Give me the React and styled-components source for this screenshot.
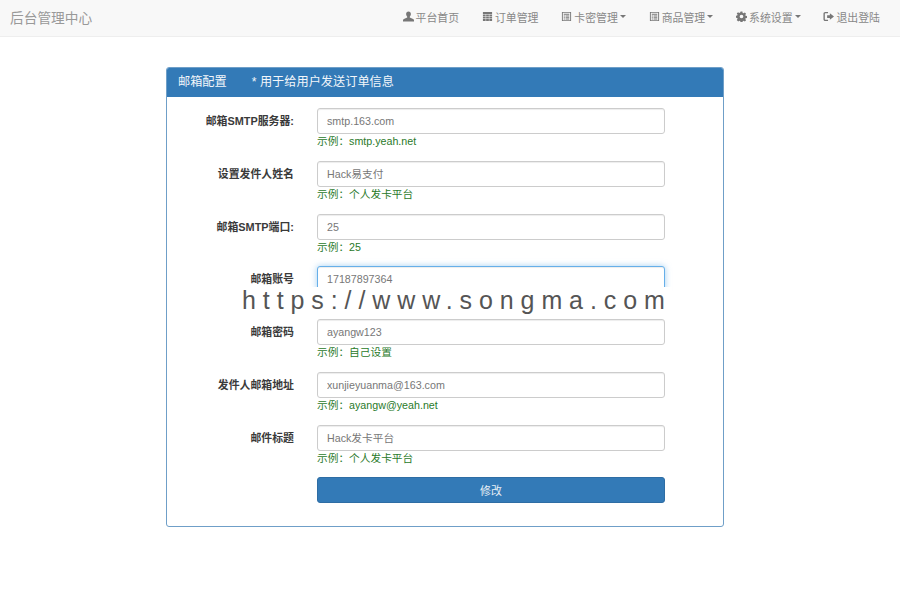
import React from "react";
import styled, { createGlobalStyle } from "styled-components";

const Global = createGlobalStyle`
  html, body { margin: 0; padding: 0; background: #fff; }
  body { font-family: "Liberation Sans", "Noto Sans CJK SC", sans-serif; width: 900px; height: 600px; overflow: hidden; }
  * { box-sizing: border-box; }
`;

const Page = styled.div`
  position: relative;
  width: 900px;
  height: 600px;
  background: #fff;
`;

const Navbar = styled.nav`
  height: 37px;
  background: #f8f8f8;
  border-bottom: 1px solid #eeeeee;
  display: flex;
  align-items: center;
  justify-content: space-between;
  padding: 0 20px 3px 10px;
`;

const Brand = styled.div`
  font-size: 13.7px;
  color: #999;
`;

const NavList = styled.div`
  display: flex;
  align-items: center;
  gap: 22.8px;
`;

const NavItem = styled.div`
  display: flex;
  align-items: center;
  gap: 2px;
  font-size: 10.9px;
  color: #888;
`;

const Caret = styled.span`
  width: 0;
  height: 0;
  margin-left: 0;
  border-top: 3px solid #777;
  border-left: 3px solid transparent;
  border-right: 3px solid transparent;
`;

const Panel = styled.section`
  width: 558px;
  height: 460px;
  margin: 30px 0 0 166px;
  border: 1px solid #6f9fc8;
  border-radius: 3px;
  overflow: hidden;
`;

const PanelHeading = styled.header`
  height: 29px;
  background: #337ab7;
  color: #f2f6fa;
  display: flex;
  align-items: center;
  padding: 0 11px 3px;
  font-size: 12.2px;
`;

const PanelNote = styled.span`
  margin-left: 25px;
`;

const Form = styled.form`
  padding-top: 11px;
  display: flex;
  flex-direction: column;
`;

const Row = styled.div`
  height: 52.75px;
  display: grid;
  grid-template-columns: 127px 348px;
  column-gap: 23px;
`;

const Label = styled.label`
  height: 26px;
  line-height: 26px;
  text-align: right;
  font-size: 10.9px;
  font-weight: 700;
  color: #3a3a3a;
`;

const Field = styled.div`
  display: flex;
  flex-direction: column;
`;

const Input = styled.input`
  width: 100%;
  height: 26px;
  padding: 0 9px;
  font: 10.7px "Liberation Sans", "Noto Sans CJK SC", sans-serif;
  color: #777;
  background: #fff;
  border: 1px solid ${p => (p.$focus ? "#66afe9" : "#ccc")};
  border-radius: 3px;
  outline: none;
  box-shadow: ${p => (p.$focus
    ? "inset 0 1px 1px rgba(0,0,0,.075), 0 0 6px rgba(102,175,233,.6)"
    : "inset 0 1px 1px rgba(0,0,0,.075)")};
`;

const Help = styled.div`
  font-size: 10.7px;
  line-height: 15px;
  color: #2a7a2a;
`;

const Submit = styled.button`
  grid-column: 2;
  height: 26px;
  background: #337ab7;
  border: 1px solid #2e6da4;
  border-radius: 3px;
  color: #e8eff6;
  font: 10.9px "Liberation Sans", "Noto Sans CJK SC", sans-serif;
`;

const Watermark = styled.div`
  position: absolute;
  left: 236px;
  top: 287px;
  width: 436px;
  height: 28px;
  padding: 1px 0 0 6px;
  background: #fff;
  font: 25px/25px "Liberation Sans", sans-serif;
  letter-spacing: 6.9px;
  color: #555;
  white-space: nowrap;
  overflow: hidden;
`;

const Icon = styled.svg`
  width: 11px;
  height: 11px;
  flex: none;
  fill: #777;
`;

const UserIcon = () => (
  <Icon viewBox="0 0 12 12"><path d="M6 .5C4.4.5 3.4 1.8 3.4 3.4c0 1.1.5 2.2 1.2 2.8v1L1 8.8c-.6.3-1 .8-1 1.4v1.3h12v-1.3c0-.6-.4-1.1-1-1.400L7.400 7.200v-1c.7-.6 1.200-1.700 1.200-2.800C8.600 1.800 7.600.5 6 .5z" /></Icon>
);
const SolidListIcon = () => (
  <Icon viewBox="0 0 12 12"><path d="M1 1h10v2.200H1zM1 3.800h3v1.700H1zM4.500 3.800h3v1.700h-3zM8 3.800h3v1.700H8zM1 6h3v1.900H1zM4.500 6h3v1.900h-3zM8 6h3v1.900H8zM1 8.400h3V11H1zM4.500 8.400h3V11h-3zM8 8.400h3V11H8z" /></Icon>
);
const ListAltIcon = () => (
  <Icon viewBox="0 0 12 12"><path fillRule="evenodd" d="M1 1h10v10H1zM2 2v8h8V2zM3 3h6v1.200H3zM3 5h1.200v1H3zM5 5h4v1H5zM3 6.800h1.200v1H3zM5 6.800h4v1H5zM3 8.400h1.200v.9H3zM5 8.400h4v.9H5z" /></Icon>
);
const CogIcon = () => (
  <Icon viewBox="0 0 24 24"><path fillRule="evenodd" d="M10 1h4l.6 3.100 2 .8 2.600-1.800 2.800 2.800-1.800 2.600.8 2 3 .6v4l-3 .6-.8 2 1.800 2.600-2.800 2.800-2.600-1.800-2 .8-.6 3.100h-4l-.6-3.100-2-.8-2.600 1.800L1.600 19.700l1.800-2.600-.8-2-3-.6v-4l3-.6.8-2L1.600 5.300l2.800-2.800L7 4.300l2-.8zM12 8a4 4 0 1 0 0 8 4 4 0 0 0 0-8z" /></Icon>
);
const LogoutIcon = () => (
  <Icon viewBox="0 0 12 12"><path d="M.5 3c0-1.100.8-2 2-2h3v1.500h-3c-.3 0-.5.2-.5.500v6c0 .3.2.5.5.5h3V11h-3c-1.200 0-2-.9-2-2z" /><path d="M7.500 2.500L12 6 7.500 9.500V7.500H4.500v-3h3z" /></Icon>
);

const links = [
  { text: "平台首页", icon: <UserIcon /> },
  { text: "订单管理", icon: <SolidListIcon /> },
  { text: "卡密管理", icon: <ListAltIcon />, caret: true },
  { text: "商品管理", icon: <ListAltIcon />, caret: true },
  { text: "系统设置", icon: <CogIcon />, caret: true },
  { text: "退出登陆", icon: <LogoutIcon /> },
];

const rows = [
  { label: "邮箱SMTP服务器:", value: "smtp.163.com", help: "示例：smtp.yeah.net" },
  { label: "设置发件人姓名", value: "Hack易支付", help: "示例：个人发卡平台" },
  { label: "邮箱SMTP端口:", value: "25", help: "示例：25" },
  { label: "邮箱账号", value: "17187897364", focus: true },
  { label: "邮箱密码", value: "ayangw123", help: "示例：自己设置" },
  { label: "发件人邮箱地址", value: "xunjieyuanma@163.com", help: "示例：ayangw@yeah.net" },
  { label: "邮件标题", value: "Hack发卡平台", help: "示例：个人发卡平台" },
];

export default function App() {
  return (
    <Page>
      <Global />
      <Navbar>
        <Brand>后台管理中心</Brand>
        <NavList>
          {links.map(l => (
            <NavItem key={l.text}>
              {l.icon}
              <span>{l.text}</span>
              {l.caret && <Caret />}
            </NavItem>
          ))}
        </NavList>
      </Navbar>
      <Panel>
        <PanelHeading>
          邮箱配置
          <PanelNote>* 用于给用户发送订单信息</PanelNote>
        </PanelHeading>
        <Form onSubmit={e => e.preventDefault()}>
          {rows.map(r => (
            <Row key={r.label}>
              <Label>{r.label}</Label>
              <Field>
                <Input defaultValue={r.value} $focus={r.focus} />
                {r.help && <Help>{r.help}</Help>}
              </Field>
            </Row>
          ))}
          <Row>
            <Submit type="submit">修改</Submit>
          </Row>
        </Form>
      </Panel>
      <Watermark>https://www.songma.com</Watermark>
    </Page>
  );
}
